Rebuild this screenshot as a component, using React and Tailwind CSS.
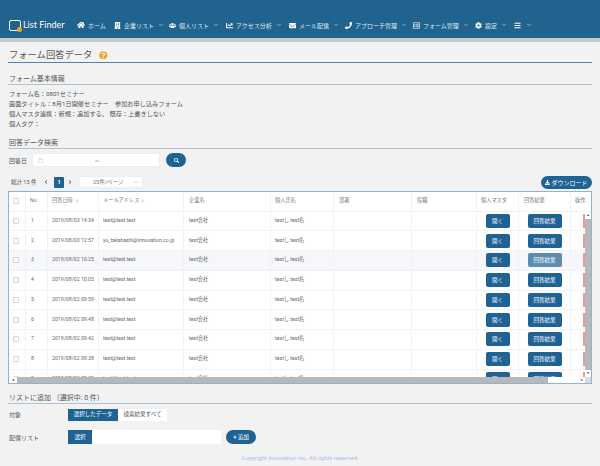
import {
  FaHome,
  FaBuilding,
  FaUsers,
  FaChartLine,
  FaEnvelope,
  FaPhone,
  FaRegListAlt,
  FaCog,
  FaBars,
  FaQuestionCircle,
  FaSearch,
  FaDownload,
  FaPlus,
  FaRegCalendar,
  FaChevronLeft,
  FaChevronRight,
} from "react-icons/fa";
import { LuChevronDown, LuChevronsUpDown } from "react-icons/lu";

const navItems = [
  { icon: FaBuilding, label: "企業リスト", w: "w-[55px]" },
  { icon: FaUsers, label: "個人リスト", w: "w-[57px]" },
  { icon: FaChartLine, label: "アクセス分析", w: "w-[63px]" },
  { icon: FaEnvelope, label: "メール配信", w: "w-[56px]" },
  { icon: FaPhone, label: "アプローチ管理", w: "w-[68px]" },
  { icon: FaRegListAlt, label: "フォーム管理", w: "w-[62px]" },
  { icon: FaCog, label: "設定", w: "w-[38px]" },
];

const rows = [
  ["1", "2019/08/03 14:34", "test@test.test"],
  ["2", "2019/08/03 12:57", "yu_takahashi@innovation.co.jp"],
  ["3", "2019/08/02 10:25", "test@test.test"],
  ["4", "2019/08/02 10:05", "test@test.test"],
  ["5", "2019/08/02 09:59", "test@test.test"],
  ["6", "2019/08/02 09:48", "test@test.test"],
  ["7", "2019/08/02 09:42", "test@test.test"],
  ["8", "2019/08/02 09:38", "test@test.test"],
  ["9", "2019/08/02 09:31", "test@test.test"],
];

const cols = "grid grid-cols-[17px_22px_51px_85px_87px_63px_78px_65px_42px_52px_20px]";
const cell = "flex items-center border-r border-[#f0f2f7] overflow-hidden whitespace-nowrap";

const SectionTitle = ({ children, className }) => (
  <div className={`border-b-[1.5px] border-[#a9c3d9] text-[7px] leading-[10px] text-[#555] ${className}`}>
    {children}
  </div>
);

const Checkbox = () => (
  <div className="w-[6px] h-[6px] border border-[#d5d5d5] rounded-[1px] bg-white"></div>
);

const Row = ({ row, hover }) => (
  <div className={`${cols} h-[19.75px] border-b border-[#f0f2f7] text-[5.2px] text-[#666] ${hover ? "bg-[#f5f7fb]" : "bg-white"}`}>
    <div className={`${cell} pl-[4px]`}>
      <Checkbox />
    </div>
    <div className={`${cell} pl-[5px]`}>{row[0]}</div>
    <div className={`${cell} pl-[4px]`}>{row[1]}</div>
    <div className={`${cell} pl-[4px]`}>{row[2]}</div>
    <div className={`${cell} pl-[5px]`}>test会社</div>
    <div className={`${cell} pl-[4px]`}>testし test名</div>
    <div className={cell}></div>
    <div className={cell}></div>
    <div className={`${cell} justify-center`}>
      <div className="w-[24px] h-[14px] rounded-[2px] bg-[#1f6394] text-white text-[5.5px] flex items-center justify-center">開く</div>
    </div>
    <div className={`${cell} justify-center`}>
      <div className={`w-[34px] h-[14px] rounded-[2px] text-white text-[5.5px] flex items-center justify-center ${hover ? "bg-[#5d8db1]" : "bg-[#1f6394]"}`}>回答結果</div>
    </div>
    <div className="flex items-center pl-[12px]">
      <div className="w-[2px] h-[14px] bg-[#e89a9a]"></div>
    </div>
  </div>
);

const App = () => {
  return (
    <div className="w-[600px] h-[466px] overflow-hidden bg-[#f2f2f2] text-[#555] font-['Roboto','Noto_Sans_CJK_JP',sans-serif]">
      <header className="h-[42px] bg-[#20638f] border-b-4 border-[#c9c9c9] flex items-center pl-[9px] pt-[12px] text-[#dfe9f0]">
        <div className="w-[68px] flex items-center gap-[1px]">
          <div className="relative w-[12px] h-[11px] border-[1.5px] border-white rounded-[2px]">
            <div className="absolute right-[-2px] bottom-[-2px] w-[5px] h-[5px] rounded-full bg-[#f0a828]"></div>
          </div>
          <span className="text-white text-[9px] font-['Lato',sans-serif] ml-[1px] whitespace-nowrap">List Finder</span>
        </div>
        <div className="w-[37px] flex items-center gap-[3px] text-[6px] whitespace-nowrap">
          <FaHome className="w-[8px] h-[8px] text-white" />
          ホーム
        </div>
        {navItems.map((item) => (
          <div key={item.label} className={`${item.w} flex items-center gap-[3px] text-[6px] whitespace-nowrap`}>
            <item.icon className="w-[7px] h-[7px] text-white shrink-0" />
            {item.label}
            <LuChevronDown className="w-[6px] h-[6px] ml-[1px] shrink-0" />
          </div>
        ))}
        <div className="flex items-center gap-[5px] ml-[1px]">
          <FaBars className="w-[7px] h-[7px] text-white" />
          <LuChevronDown className="w-[6px] h-[6px]" />
        </div>
      </header>

      <main className="px-[8px]">
        <div className="h-[21px] border-b border-[#4a86b8] flex items-end pb-[1px] pl-px">
          <span className="text-[9.3px] leading-[13px] text-[#555]">フォーム回答データ</span>
          <FaQuestionCircle className="w-[8.5px] h-[8.5px] text-[#f0a326] ml-[7px] mb-[2px]" />
        </div>

        <SectionTitle className="mt-[11px] pl-px">フォーム基本情報</SectionTitle>
        <div className="mt-[4px] pl-px text-[6.2px] leading-[10px] text-[#555]">
          <div>フォーム名：0801セミナー</div>
          <div>画面タイトル：8月1日開催セミナー　参加お申し込みフォーム</div>
          <div>個人マスタ連携：新規：追加する、 既存：上書きしない</div>
          <div>個人タグ：</div>
        </div>

        <SectionTitle className="mt-[9px] pl-px">回答データ検索</SectionTitle>
        <div className="flex items-center mt-[4px] h-[14px] pl-px">
          <span className="w-[23px] text-[6px]">回答日</span>
          <div className="w-[128px] h-[14px] bg-white rounded-[2px] border border-[#eeeeee] flex items-center pl-[5px]">
            <FaRegCalendar className="w-[5px] h-[5px] text-[#d0d0d0]" />
            <span className="ml-[52px] text-[6px]">~</span>
          </div>
          <div className="w-[20px] h-[14px] ml-[6px] rounded-full bg-[#1f6394] flex items-center justify-center">
            <FaSearch className="w-[5px] h-[5px] text-white" />
          </div>
        </div>

        <div className="flex items-center mt-[8px] h-[14px] text-[5.5px] pl-[3px]">
          <span className="w-[33px]">総計 15 件</span>
          <FaChevronLeft className="w-[4px] h-[4px] text-[#555]" />
          <div className="w-[10px] h-[11px] ml-[6px] bg-[#1f6394] rounded-[1px] text-white font-bold flex items-center justify-center">1</div>
          <FaChevronRight className="w-[4px] h-[4px] ml-[4px] text-[#555]" />
          <div className="w-[64px] h-[12px] ml-[7px] bg-white border border-[#eeeeee] rounded-[2px] flex items-center pl-[13px] pr-[3px] justify-between text-[#777]">
            25件/ページ
            <LuChevronDown className="w-[6px] h-[6px] text-[#aaa]" />
          </div>
          <div className="ml-auto w-[51px] h-[13px] bg-[#1f6394] rounded-full text-white text-[6px] flex items-center justify-center gap-[1px]">
            <FaDownload className="w-[5px] h-[5px]" />
            ダウンロード
          </div>
        </div>

        <div className="relative mt-[2px] h-[193px] border border-[#8fb4d3] bg-white overflow-hidden">
          <div className={`${cols} h-[19.5px] border-b border-[#f0f2f7] text-[5.2px] text-[#777]`}>
            <div className={`${cell} pl-[4px]`}>
              <Checkbox />
            </div>
            <div className={`${cell} pl-[4px]`}>No</div>
            <div className={`${cell} gap-[2px] pl-[4px]`}>
              回答日時 <LuChevronsUpDown className="w-[4px] h-[4px]" />
            </div>
            <div className={`${cell} gap-[2px] pl-[4px]`}>
              メールアドレス <LuChevronsUpDown className="w-[4px] h-[4px]" />
            </div>
            <div className={`${cell} pl-[5px]`}>企業名</div>
            <div className={`${cell} pl-[4px]`}>個人氏名</div>
            <div className={`${cell} pl-[5px]`}>部署</div>
            <div className={`${cell} pl-[5px]`}>役職</div>
            <div className={`${cell} pl-[4px]`}>個人マスタ</div>
            <div className={`${cell} pl-[5px]`}>回答結果</div>
            <div className="flex items-center pl-[4px] whitespace-nowrap">操作</div>
          </div>
          {rows.map((row) => (
            <Row key={row[0]} row={row} hover={row[0] === "3"} />
          ))}

          {/* スクロールバー */}
          <div className="absolute right-0 top-[20px] bottom-[6px] w-[6px] bg-white flex flex-col">
            <div className="h-[7px] text-[4px] leading-[5px] text-center text-[#444]">▴</div>
            <div className="h-[151px] bg-[#b8b8b8]"></div>
            <div className="h-[6px] text-[4px] leading-[6px] text-center text-[#444]">▾</div>
          </div>
          <div className="absolute left-0 right-0 bottom-0 h-[6px] bg-white flex items-center">
            <div className="w-[8px] text-[4px] leading-[6px] text-center text-[#444]">◂</div>
            <div className="w-[531px] h-[6px] bg-[#b8b8b8]"></div>
            <div className="ml-auto w-[6px] text-[4px] leading-[6px] text-center text-[#444]">▸</div>
            <div className="w-[6px] h-[6px] bg-[#dcdcdc]"></div>
          </div>
        </div>

        <SectionTitle className="mt-[9px] pl-px">リストに追加 （選択中: 0 件）</SectionTitle>

        <div className="flex items-center mt-[4px] h-[13px] text-[6px] pl-px">
          <span className="w-[59px]">対象</span>
          <div className="w-[50px] h-[12px] bg-[#1f6394] text-white flex items-center justify-center text-[5.5px]">選択したデータ</div>
          <div className="w-[49px] h-[12px] bg-white text-[#555] flex items-center justify-center text-[5.5px]">検索結果すべて</div>
        </div>

        <div className="flex items-center mt-[9px] h-[14px] text-[6px] pl-px">
          <span className="w-[59px]">配信リスト</span>
          <div className="w-[24px] h-[14px] bg-[#1f6394] text-white flex items-center justify-center text-[5.5px]">選択</div>
          <div className="w-[129px] h-[14px] bg-white rounded-r-[2px]"></div>
          <div className="w-[30px] h-[14px] ml-[5px] bg-[#1f6394] rounded-full text-white flex items-center justify-center gap-[1px] text-[5.5px]">
            <FaPlus className="w-[4px] h-[4px]" />
            追加
          </div>
        </div>

        <div className="mt-[10px] text-center text-[6px] leading-[8px] text-[#a9c0f0]">
          Copyright Innovation Inc. All rights reserved.
        </div>
      </main>
    </div>
  );
};

export default App;
